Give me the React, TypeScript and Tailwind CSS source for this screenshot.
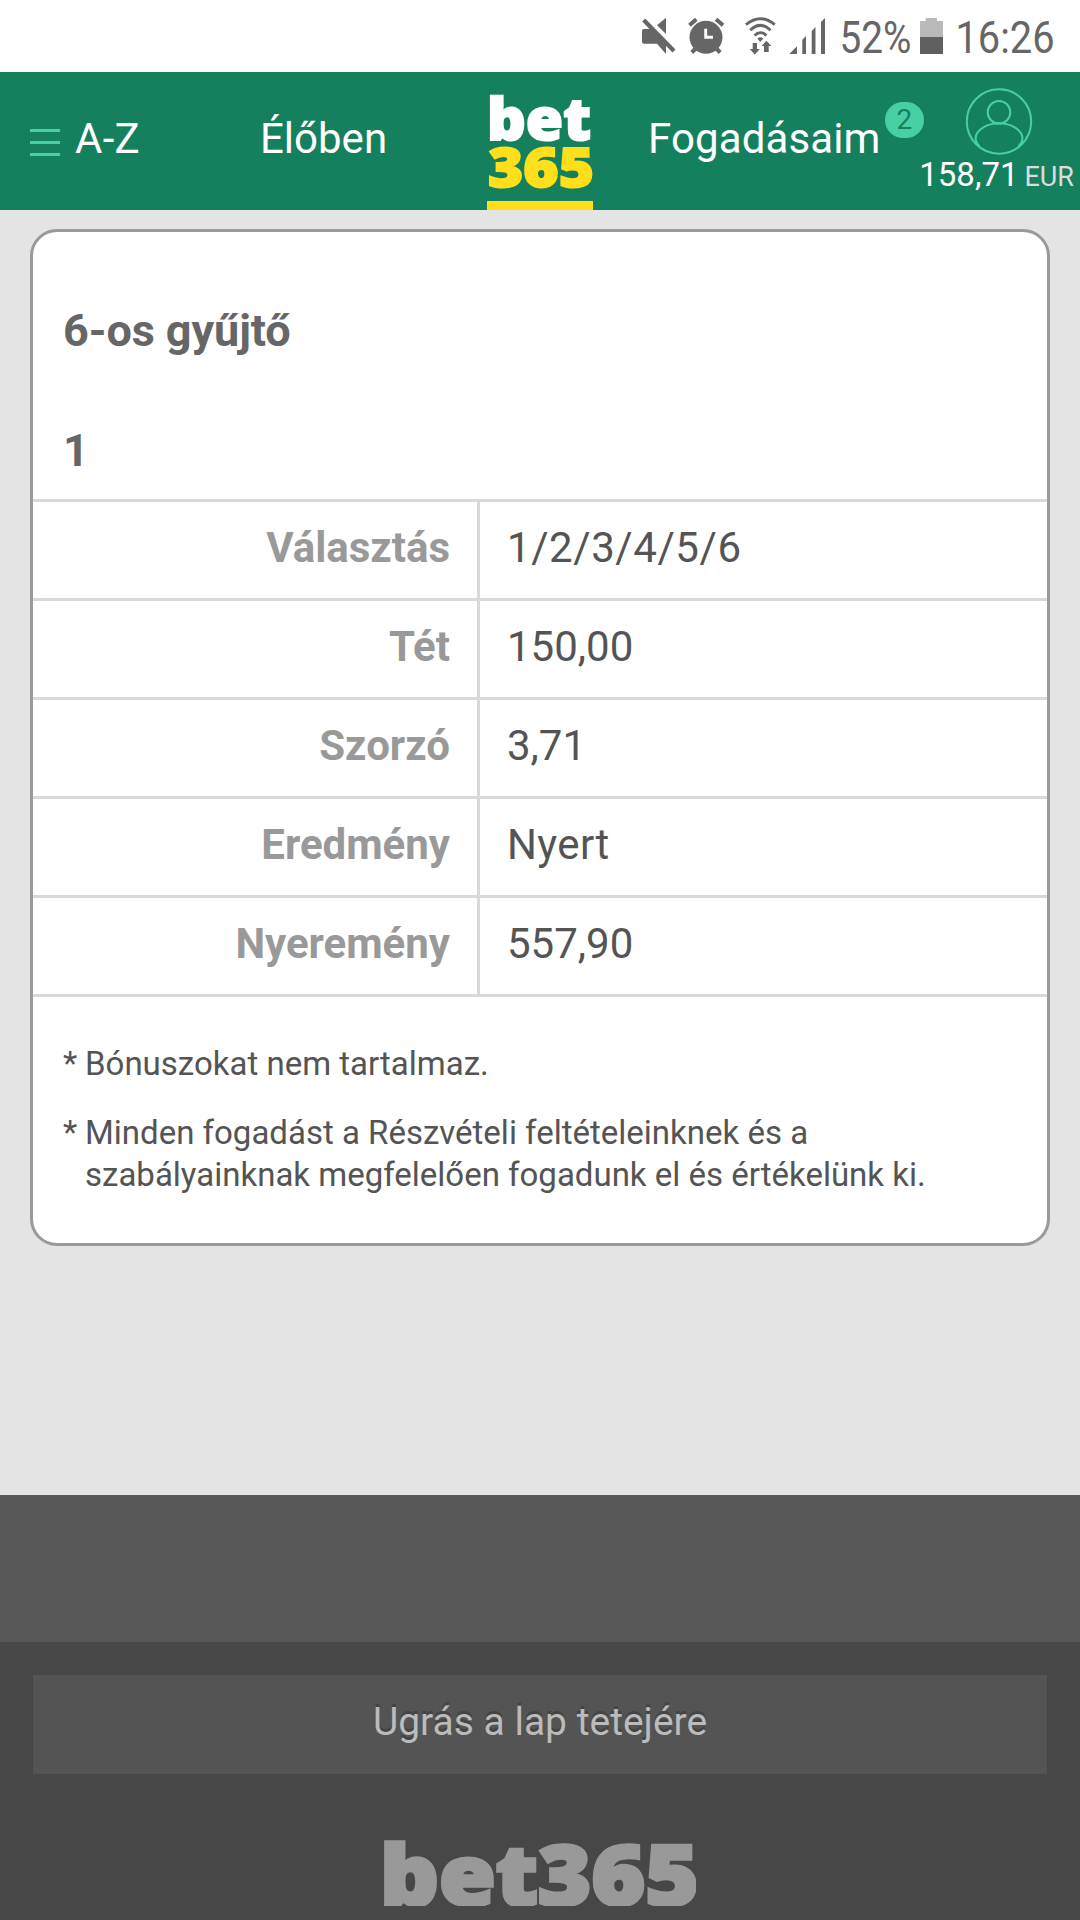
import type { ReactNode } from 'react';
import clsx from 'clsx';

const rows = [
  { label: 'Választás', value: '1/2/3/4/5/6', tracking: 'tracking-[0.58px]' },
  { label: 'Tét', value: '150,00' },
  { label: 'Szorzó', value: '3,71' },
  { label: 'Eredmény', value: 'Nyert', tracking: 'tracking-[0.35px]' },
  { label: 'Nyeremény', value: '557,90' },
];

function StatusBar() {
  return (
    <div className="h-[72px] flex justify-end pr-[22px] bg-white text-[#666666]">
      {/* Muted */}
      <svg width="40" height="72" fill="currentColor">
        <path d="M2 31Q2 29 4 29H13L26 42V54L17 43.7H4Q2 43.7 2 41.7Z" />
        <path d="M17 25.3L26 17.7V34Z" />
        <path d="M3.7 20L34 51" stroke="currentColor" strokeWidth="4.2" />
      </svg>
      {/* Alarm */}
      <svg width="60" height="72" fill="none" stroke="currentColor" strokeWidth="4">
        <circle cx="26" cy="37.3" r="16.5" fill="currentColor" stroke="none" />
        <path d="M9.5 25.3L16.3 19.3M36 19.3L43 25.3M11.8 52.5L17.5 46.5M34.5 46.5L40.2 52.5" />
        <path d="M25.7 28.7V37.2H33" stroke="white" strokeWidth="2.9" />
      </svg>
      {/* Wi-Fi */}
      <svg width="45" height="72" fill="none" stroke="currentColor" strokeWidth="2.9">
        <path d="M6 24.6Q20.3 12.8 34.7 24.6M10.3 30.2Q20.3 20.6 30.5 30.2M14.6 35.6Q20.3 29.6 26.3 35.6" />
        <g fill="currentColor" stroke="none">
          <path d="M17.3 38.5Q20.3 36 23.3 38.5L20.3 42Z" />
          <path d="M12.7 43H17V49H19.9L14.8 54.4L9.7 49H12.7Z" />
          <path d="M26.4 40.7L31.4 46H28.7V52H24V46H21.5Z" />
        </g>
      </svg>
      {/* Signal */}
      <svg width="51" height="72" fill="currentColor">
        <path d="M4.3 54L12 46.3V54ZM17.3 54V39.7L21 36V54ZM26.7 54V31L30.5 27V54ZM36 54V22L40 18V54Z" />
      </svg>
      <svg width="80" height="72" fill="currentColor" className="overflow-visible font-['Roboto'] text-[45px]">
        <text x="3.5" y="53" textLength="72" lengthAdjust="spacingAndGlyphs">52%</text>
      </svg>
      {/* Battery */}
      <svg width="38" height="72">
        <path d="M4 21H9.7V18H21V21H27V37H4Z" fill="#b9b9b9" />
        <path d="M4 37H27V54H4Z" fill="#606060" />
      </svg>
      <svg width="104" height="72" fill="currentColor" className="overflow-visible font-['Roboto'] text-[45px]">
        <text x="1.5" y="53" textLength="99" lengthAdjust="spacingAndGlyphs">16:26</text>
      </svg>
    </div>
  );
}

function Header() {
  return (
    <header className="h-[138px] flex bg-[#15805d] text-white text-[42px] leading-[48px]">
      <div className="w-[260px] pl-[30px] pt-[43px] flex">
        <div className="mt-[14px] mr-[15px] w-[30px] h-[27px] flex flex-col justify-between">
          <span className="h-[3px] bg-[#48d0a4]" />
          <span className="h-[3px] bg-[#48d0a4]" />
          <span className="h-[3px] bg-[#48d0a4]" />
        </div>
        <span className="tracking-[0.3px]">A-Z</span>
      </div>
      <div className="w-[227px] pt-[43px]">Élőben</div>
      <div className="w-[106px] flex flex-col">
        <svg width="106" height="129" className="overflow-visible font-['Open_Sans',sans-serif] font-extrabold">
          <text x="0" y="68" fill="white" stroke="white" strokeWidth="2" fontSize="58" textLength="104" lengthAdjust="spacingAndGlyphs">bet</text>
          <text x="1" y="115" fill="#ffdf1b" stroke="#ffdf1b" strokeWidth="2" fontSize="55" textLength="106" lengthAdjust="spacingAndGlyphs">365</text>
        </svg>
        <div className="h-[9px] bg-[#ffdf1b]" />
      </div>
      <div className="relative ml-[55px] pt-[43px] w-[231px] tracking-[0.12px]">
        Fogadásaim
        <span className="absolute left-[237px] top-[30px] w-[39px] h-9 rounded-[18px] bg-[#48d0a4] text-[#15805d] text-[28px] leading-[35px] text-center">2</span>
      </div>
      <div className="flex-1 pt-[15px] pr-[6px] flex flex-col items-end">
        <svg width="68" height="68" className="mr-[40px] shrink-0" fill="none" stroke="#48d0a4" strokeWidth="2">
          <circle cx="33" cy="34.5" r="32.2" />
          <circle cx="33" cy="25.3" r="11.3" />
          <path d="M13.5 59.5Q9.5 55 9.6 51C10 43 21 36.3 33 36.3S56.2 43 56.4 51Q56.5 55 52.5 59.5" />
        </svg>
        <div className="mt-px text-[33px] leading-[38px] whitespace-nowrap">
          158,71<span className="ml-[6px] text-[27px] text-[#dcdcdc]">EUR</span>
        </div>
      </div>
    </header>
  );
}

function Note({ children, className }: { children: ReactNode; className?: string }) {
  return (
    <p className={clsx('flex text-[33px] leading-[42px] text-[#545454]', className)}>
      <span className="w-[22px] shrink-0">*</span>
      <span>{children}</span>
    </p>
  );
}

function BetCard() {
  return (
    <section className="mx-[30px] h-[1017px] rounded-[27px] border-[3px] border-[#999999] bg-white">
      <div className="h-[267px] px-[30px] pt-[71px] text-[45px] leading-[56px] font-bold text-[#666666]">
        <h1 className="tracking-[-0.08px]">6-os gyűjtő</h1>
        <h2 className="mt-16">1</h2>
      </div>
      <div className="border-t-[3px] border-[#d9d9d9]">
        {rows.map((row) => (
          <div key={row.label} className="h-[99px] flex border-b-[3px] border-[#d9d9d9] text-[42px] leading-[92px]">
            <div className="w-[447px] border-r-[3px] border-[#d9d9d9] pr-[27px] text-right font-bold text-[#999999]">{row.label}</div>
            <div className={clsx('pl-[27px] text-[#545454]', row.tracking)}>{row.value}</div>
          </div>
        ))}
      </div>
      <div className="pl-[30px] pt-[46px]">
        <Note>Bónuszokat nem tartalmaz.</Note>
        <Note className="mt-[27px]">
          Minden fogadást a Részvételi feltételeinknek és a<br />
          szabályainknak megfelelően fogadunk el és értékelünk ki.
        </Note>
      </div>
    </section>
  );
}

function Footer() {
  return (
    <footer className="h-[425px] bg-[#474747] overflow-hidden">
      <div className="h-[147px] bg-[#585858]" />
      <button className="block mx-[33px] mt-[33px] w-[1014px] h-[99px] pb-[4px] bg-[#545454] text-[39px] text-[#bbbbbb] [text-shadow:0_-3px_0_#444444]">
        Ugrás a lap tetejére
      </button>
      <svg width="312" height="66" className="block mx-auto mt-[66px] font-['Open_Sans',sans-serif] font-extrabold">
        <text x="-4" y="64.5" fill="#999999" stroke="#999999" strokeWidth="3.5" fontSize="83" textLength="319" lengthAdjust="spacingAndGlyphs">bet365</text>
      </svg>
    </footer>
  );
}

function App() {
  return (
    <div className="w-[1080px] h-[1920px] overflow-hidden flex flex-col bg-[#e4e4e4] font-['Roboto',sans-serif]">
      <StatusBar />
      <Header />
      <main className="flex-1 pt-[19px]">
        <BetCard />
      </main>
      <Footer />
    </div>
  );
}

export default App;
